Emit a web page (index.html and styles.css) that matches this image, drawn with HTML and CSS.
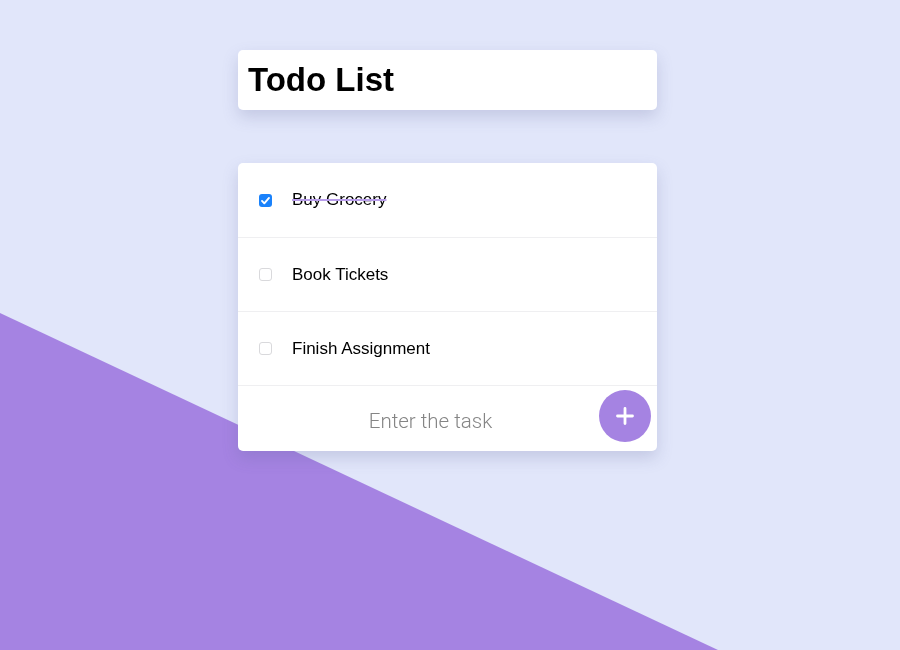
FILE: index.html
```html
<!DOCTYPE html>
<html lang="en">
<head>
<meta charset="utf-8">
<title>Todo List</title>
<link rel="stylesheet" href="styles.css">
</head>
<body>
<div class="backdrop"></div>
<main class="app">
  <header class="card title-card">
    <h1 class="title">Todo List</h1>
  </header>
  <section class="card list-card">
    <ul class="tasks">
      <li class="task">
        <input type="checkbox" class="check" checked>
        <span class="task-text done">Buy Grocery</span>
      </li>
      <li class="task">
        <input type="checkbox" class="check">
        <span class="task-text">Book Tickets</span>
      </li>
      <li class="task">
        <input type="checkbox" class="check">
        <span class="task-text">Finish Assignment</span>
      </li>
    </ul>
    <form class="add-row">
      <input class="task-input" type="text" placeholder="Enter the task">
      <button class="add-btn" type="button" aria-label="Add">
        <svg width="18" height="18" viewBox="0 0 18 18"><path d="M9 1.5v15M1.5 9h15" stroke="#fff" stroke-width="2.8" stroke-linecap="round"/></svg>
      </button>
    </form>
  </section>
</main>
</body>
</html>
```
FILE: styles.css
```css
html {
  background: #e1e6fa;
}
body {
  margin: 0;
  min-height: 650px;
  font-family: "Liberation Sans", Arial, sans-serif;
}
.backdrop {
  position: fixed;
  inset: 0;
  background: #a583e2;
  clip-path: polygon(0 313px, 718px 650px, 0 650px);
  z-index: 0;
}
.app {
  position: relative;
  z-index: 1;
  width: 419px;
  margin-left: 238px;
  padding-top: 50px;
  display: flex;
  flex-direction: column;
  gap: 53px;
}
.card {
  background: #fff;
  border-radius: 5px;
  box-shadow: 0 7px 16px rgba(90, 95, 150, 0.22);
}
.title-card {
  height: 60px;
  display: flex;
  align-items: center;
  padding-left: 10px;
}
.title {
  margin: 0;
  font-size: 33px;
  font-weight: bold;
  color: #000;
}
.tasks {
  list-style: none;
  margin: 0;
  padding: 0;
}
.task {
  height: 73px;
  border-bottom: 1px solid #efeff1;
  display: flex;
  align-items: center;
  padding-left: 21px;
  gap: 20px;
}
.task:first-child {
  height: 74px;
}
.check {
  appearance: none;
  -webkit-appearance: none;
  margin: 0;
  width: 13px;
  height: 13px;
  border: 1px solid #d9d9dc;
  border-radius: 3px;
  background: #fff;
  box-sizing: border-box;
}
.check:checked {
  border: none;
  background: #1a82fb url("data:image/svg+xml;utf8,<svg xmlns='http://www.w3.org/2000/svg' viewBox='0 0 13 13'><path d='M3 6.9l2.3 2.4 4.7-5.4' fill='none' stroke='white' stroke-width='1.9' stroke-linecap='round' stroke-linejoin='round'/></svg>") center/13px 13px no-repeat;
}
.task-text {
  font-size: 17px;
  color: #000;
}
.task-text.done {
  text-decoration: line-through;
  text-decoration-color: #b79cea;
  text-decoration-thickness: 1.5px;
}
.add-row {
  height: 65px;
  margin: 0;
  display: flex;
  align-items: flex-start;
  padding-right: 6px;
}
.task-input {
  flex: 1;
  height: 65px;
  border: none;
  outline: none;
  background: transparent;
  padding: 2px 0 0 24px;
  text-align: center;
  font-family: Roboto, "Liberation Sans", sans-serif;
  font-weight: 300;
  font-size: 20.5px;
  color: #333;
}
.task-input::placeholder {
  color: #858585;
}
.add-btn {
  margin-top: 4px;
  width: 52px;
  height: 52px;
  border: none;
  border-radius: 50%;
  background: #a583e2;
  display: flex;
  align-items: center;
  justify-content: center;
  padding: 0;
}
```
